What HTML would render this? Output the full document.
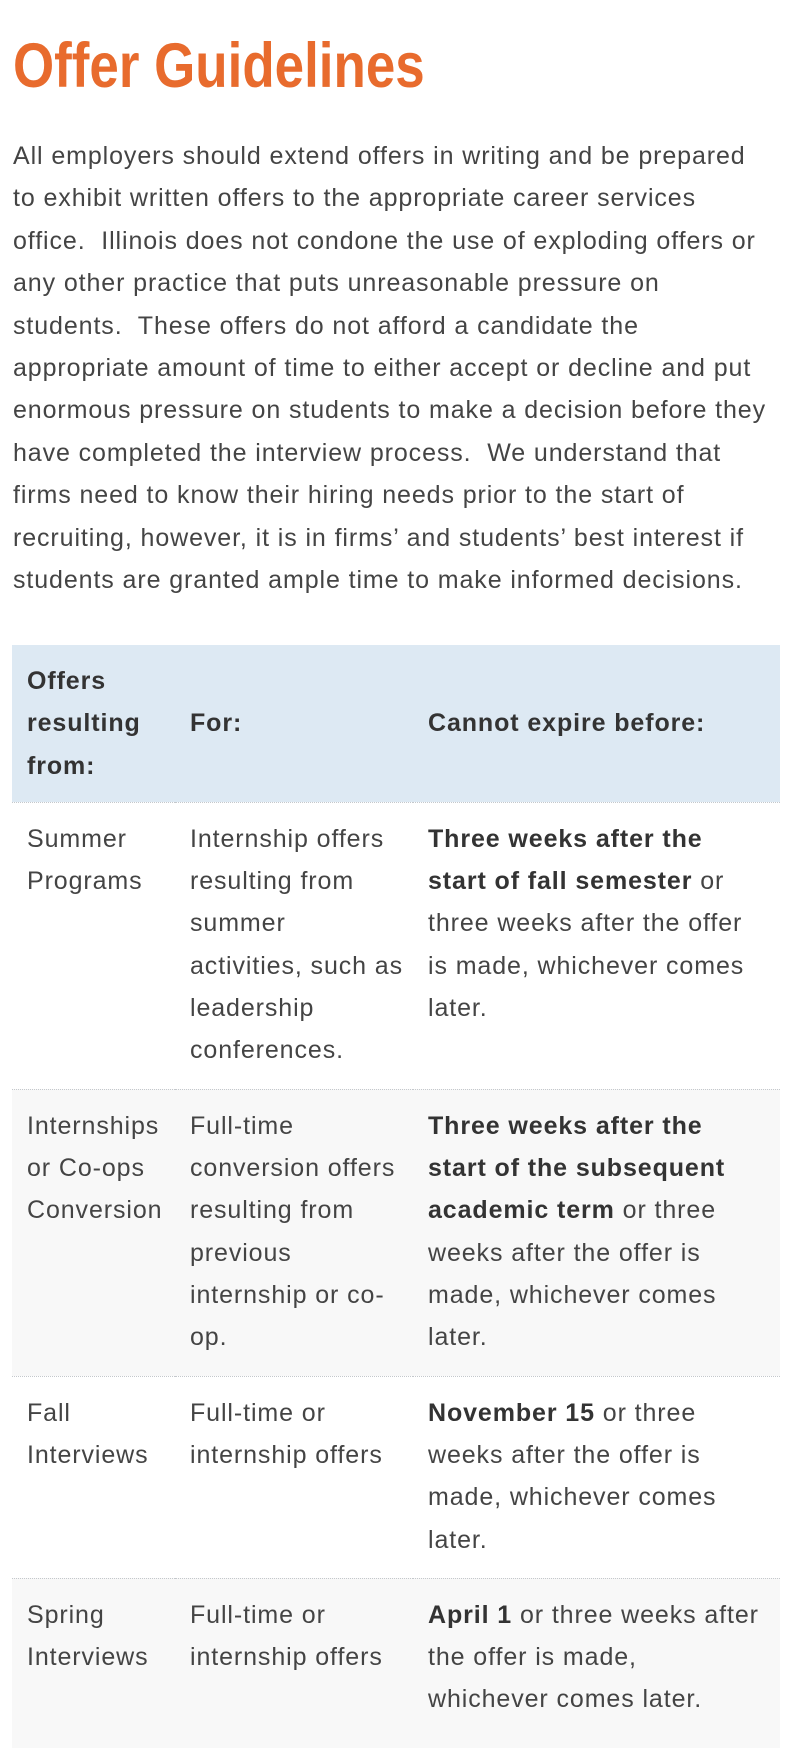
<!DOCTYPE html>
<html><head><meta charset="utf-8"><style>
html,body{margin:0;padding:0;background:#fff;}
body{width:794px;height:1712px;position:relative;overflow:hidden;font-family:"Liberation Sans",Arial,sans-serif;color:#444;}
h1{position:absolute;left:13px;top:21px;margin:0;font-family:"Liberation Sans Narrow","Liberation Sans",sans-serif;font-weight:bold;font-size:63px;line-height:90px;color:#e86b2d;white-space:nowrap;transform:scaleX(0.84);transform-origin:0 0;}
.p{position:absolute;left:13px;top:135px;font-size:25px;letter-spacing:0.9px;line-height:42.4px;white-space:nowrap;}
table{position:absolute;left:12px;top:645px;width:768px;border-collapse:collapse;font-size:25px;letter-spacing:0.9px;line-height:42.3px;}
td,th{vertical-align:top;text-align:left;padding:15px 0 15px 15px;white-space:nowrap;}
th{vertical-align:middle;color:#333;}
thead tr{background:#dde9f3;}
tbody tr{border-top:1px dotted #c4c8cc;}
tr.g{background:#f8f8f8;}
b{color:#333;}
</style></head><body>
<h1>Offer Guidelines</h1>
<div class="p">All employers should extend offers in writing and be prepared<br>to exhibit written offers to the appropriate career services<br>office.&nbsp; Illinois does not condone the use of exploding offers or<br>any other practice that puts unreasonable pressure on<br>students.&nbsp; These offers do not afford a candidate the<br>appropriate amount of time to either accept or decline and put<br>enormous pressure on students to make a decision before they<br>have completed the interview process.&nbsp; We understand that<br>firms need to know their hiring needs prior to the start of<br>recruiting, however, it is in firms’ and students’ best interest if<br>students are granted ample time to make informed decisions.</div>
<table>
<colgroup><col style="width:163px"><col style="width:238px"><col></colgroup>
<thead><tr><th>Offers<br>resulting<br>from:</th><th>For:</th><th>Cannot expire before:</th></tr></thead>
<tbody>
<tr style="height:287px"><td>Summer<br>Programs</td><td>Internship offers<br>resulting from<br>summer<br>activities, such as<br>leadership<br>conferences.</td><td><b>Three weeks after the<br>start of fall semester</b> or<br>three weeks after the offer<br>is made, whichever comes<br>later.</td></tr>
<tr class="g" style="height:287px"><td>Internships<br>or Co-ops<br>Conversion</td><td>Full-time<br>conversion offers<br>resulting from<br>previous<br>internship or co-<br>op.</td><td><b>Three weeks after the<br>start of the subsequent<br>academic term</b> or three<br>weeks after the offer is<br>made, whichever comes<br>later.</td></tr>
<tr style="height:202px"><td>Fall<br>Interviews</td><td>Full-time or<br>internship offers</td><td><b>November 15</b> or three<br>weeks after the offer is<br>made, whichever comes<br>later.</td></tr>
<tr class="g" style="height:170px"><td>Spring<br>Interviews</td><td>Full-time or<br>internship offers</td><td><b>April 1</b> or three weeks after<br>the offer is made,<br>whichever comes later.</td></tr>
</tbody></table>
</body></html>
